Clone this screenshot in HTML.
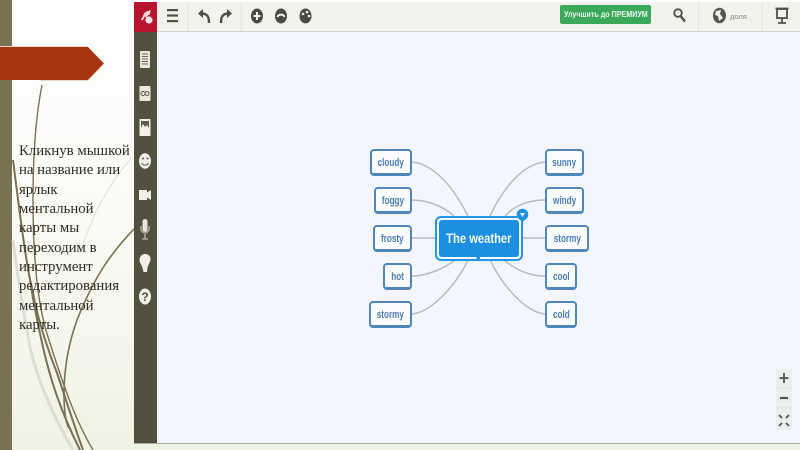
<!DOCTYPE html>
<html lang="ru"><head><meta charset="utf-8"><title>The weather</title>
<style>
html,body{margin:0;padding:0;width:800px;height:450px;overflow:hidden}
body{position:relative;background:linear-gradient(#ffffff 0,#fbfcf8 40%,#eff3e3 100%);font-family:"Liberation Sans",sans-serif}
.abs{position:absolute}
#copy{position:absolute;left:19px;top:142px;width:115px;font:14.8px/19.35px "Liberation Serif",serif;color:#2e2c22;filter:blur(.35px);white-space:nowrap}
.n{position:absolute;box-sizing:border-box;height:27px;background:#fbfcff;border:2px solid #4f87bd;border-bottom-width:3px;border-radius:4px;color:#4a7db5;font:bold 11px/25px "Liberation Sans",sans-serif;text-align:center;filter:blur(.35px);display:flex;justify-content:center}
.n span{display:block;transform:scaleX(.74);white-space:nowrap}
#main{position:absolute;left:435px;top:216px;width:88px;height:45px;box-sizing:border-box;border:2px solid #2196e8;border-radius:6px;background:#f4f8ff;padding:2px;filter:blur(.3px)}
#main div{height:37px;background:#1d8fe1;border-radius:3px;color:#f4f9ff;font:bold 14px/37px "Liberation Sans",sans-serif;display:flex;justify-content:center}
#main span{display:block;transform:scaleX(.8);white-space:nowrap}
#prem{position:absolute;left:560px;top:5px;width:91px;height:19px;background:#3aaa5a;border-radius:2px;color:#eef8ef;font:bold 8.5px/19px "Liberation Sans",sans-serif;display:flex;justify-content:center;filter:blur(.3px)}
#prem span{display:block;transform:scaleX(.84);white-space:nowrap}
</style></head><body>
<div class="abs" style="left:0;top:0;width:12px;height:450px;background:#7a7155"></div>

<svg class="abs" style="left:0;top:0" width="134" height="450" viewBox="0 0 134 450" fill="none">
<polygon points="0,47 88,47 104,63.5 88,80 0,80" fill="#a5340f"/>
<path d="M88,46.5 L0,46.5" stroke="#f3d5c7" stroke-width="1"/>
<path d="M40,80.5 L88,80.5 L104,64" stroke="#f3d5c7" stroke-width="1"/>
<path d="M13,240 C18,280 24,315 30,347 C36,375 52,415 73,450" stroke="#dcdfcf" stroke-width="3"/>
<path d="M132,157 C108,185 92,215 80,253" stroke="#e2e4d6" stroke-width="1.2"/>
<g stroke="#7a7155" fill="none">
<path d="M42,85 C36,115 33,150 33,200 C33,250 36,300 48,337 C58,368 72,415 93,450" stroke-width="1.4"/>
<path d="M13,160 C20,215 26,265 33,293 C38,320 48,350 57,373 C66,400 74,425 83,450" stroke-width="2"/>
<path d="M30,280 C33,300 38,325 43,347 C50,378 60,410 80,450" stroke-width="2"/>
<path d="M134,229 C112,252 95,275 77,320 C68,345 64,370 64,395 C64,410 66,425 69,428" stroke-width="1.6"/>
</g>
</svg>

<div id="copy">Кликнув мышкой<br>на название или<br>ярлык<br>ментальной<br>карты мы<br>переходим в<br>инструмент<br>редактирования<br>ментальной<br>карты.</div>

<!-- App -->
<div class="abs" style="left:134px;top:2px;width:666px;height:441px;background:#f3f6ff;box-shadow:0 1px 0 #a9ad9c"></div>
<div class="abs" style="left:134px;top:2px;width:666px;height:30px;background:#f3f3ed;border-bottom:1px solid #d5d5d0;box-sizing:border-box"></div>
<div class="abs" style="left:134px;top:32px;width:23px;height:411px;background:#52503f"></div>
<div class="abs" style="left:134px;top:2px;width:23px;height:30px;background:#b8142f"></div>

<svg class="abs" style="left:134px;top:0;filter:blur(.3px)" width="666" height="445" viewBox="134 0 666 445">
<!-- logo -->
<g fill="#f6e6e8"><circle cx="149" cy="20" r="3.6"/><circle cx="148" cy="13" r="2"/><path d="M141,20 L145,12 L146.5,13 L143,20Z M145,16 L150,10 L151,11 L146,18Z"/></g>
<!-- hamburger -->
<g fill="#4f4f45"><rect x="167" y="9" width="11" height="2.2"/><rect x="167" y="14.4" width="11" height="2.2"/><rect x="167" y="20" width="11" height="2.2"/></g>
<!-- undo/redo -->
<g fill="none" stroke="#4f4f45" stroke-width="2.4"><path d="M209,23 C209,16 207,13.5 201,13.5"/><path d="M221,23 C221,16 223,13.5 229,13.5"/></g>
<g fill="#4f4f45"><polygon points="198,13.5 203,9 203,18"/><polygon points="232,13.5 227,9 227,18"/></g>
<!-- circles -->
<g fill="#4a4a40"><ellipse cx="257" cy="16" rx="6" ry="7.5"/><ellipse cx="281" cy="16" rx="6" ry="7.5"/><ellipse cx="305.500" cy="16" rx="6" ry="7.5"/></g>
<path d="M257,12 V20 M253.500,16 H260.500" stroke="#f3f3ed" stroke-width="2"/>
<path d="M277.500,17 A3.8,3.8 0 0 1 284.500,17" stroke="#f3f3ed" stroke-width="2" fill="none"/>
<g fill="#f3f3ed"><circle cx="303" cy="14" r="1.3"/><circle cx="307" cy="12" r="1.3"/><circle cx="309" cy="16" r="1.3"/></g>
<!-- separators -->
<g stroke="#e3e3dc"><path d="M188,3 V31 M241,3 V31 M698.500,3 V31 M762,3 V31"/></g>
<!-- search -->
<circle cx="678" cy="13" r="3.800" fill="none" stroke="#4f4f45" stroke-width="1.800"/>
<path d="M680.500,16 L685,21.500" stroke="#4f4f45" stroke-width="2.400"/>
<!-- globe -->
<ellipse cx="719.500" cy="15.500" rx="6.500" ry="7.800" fill="#55554a"/>
<path d="M716,11 L721,10 L720,14 L723,18 L719,21 L718,16 L715,15Z" fill="#f3f3ed"/>
<text x="730" y="19" font-family="Liberation Sans, sans-serif" font-size="7.500" fill="#8d8d85">доля</text>
<!-- presentation -->
<rect x="777" y="9" width="10" height="9" fill="none" stroke="#4f4f45" stroke-width="1.800"/>
<path d="M775.500,8.500 H788.500 M782,18 V22 M778,23 H786" stroke="#4f4f45" stroke-width="1.800"/>

<!-- sidebar icons -->
<rect x="140" y="51" width="10" height="17" rx="1" fill="#e9e9e0"/>
<path d="M142,54 H148 M142,56.500 H148 M142,59 H148 M142,61.500 H148 M142,64 H148" stroke="#6b6a5c" stroke-width="1"/>
<rect x="139.500" y="86" width="11" height="15" rx="1" fill="#e9e9e0"/>
<circle cx="143" cy="93.500" r="2" fill="none" stroke="#56564a" stroke-width="1"/><circle cx="147" cy="93.500" r="2" fill="none" stroke="#56564a" stroke-width="1"/>
<rect x="139.500" y="119" width="11" height="17" fill="#f0f0e8"/>
<path d="M141,121 H149 V128 L147,125 L145,127 L143,124 L141,128Z" fill="#5d5c4e"/>
<ellipse cx="145" cy="161" rx="6" ry="7.800" fill="#efefe7"/>
<circle cx="143" cy="158.500" r="1" fill="#55544a"/><circle cx="147.500" cy="158.500" r="1" fill="#55544a"/>
<path d="M141.500,163 Q145,167.500 148.500,163" stroke="#55544a" stroke-width="1" fill="none"/>
<path d="M139,190 H147 V192.500 L151,190 V200 L147,197.500 V200 H139Z" fill="#f0f0e8"/>
<rect x="142.500" y="219" width="5" height="13" rx="2.500" fill="#e6e6dc"/>
<path d="M141,226 V230 Q145,236 149,230 V226 M145,234 V239 M142,239 H148" stroke="#a9a99c" stroke-width="1.500" fill="none"/>
<path d="M145,254 C149,254 151,257 150.500,260 C150,263 148,265 147.500,268 L147,272 H143.500 L142.500,268 C142,265 139.500,263 139.500,260 C139.500,256.500 142,254 145,254Z" fill="#f0f0e8"/>
<ellipse cx="145" cy="296.500" rx="6" ry="8" fill="#efefe7"/>
<text x="145" y="301" text-anchor="middle" font-family="Liberation Sans, sans-serif" font-weight="bold" font-size="12" fill="#4f4e40">?</text>

<!-- connectors -->
<g fill="none" stroke="#bababa" stroke-width="1.500">
<path d="M412,162 C435,164 455,190 468,216"/>
<path d="M412,200 C425,200 442,205 454,216"/>
<path d="M412,238 H435"/>
<path d="M412,276 C425,276 442,270 455,260"/>
<path d="M412,314 C432,312 456,285 468,260"/>
<path d="M545,162 C522,164 502,190 490,216"/>
<path d="M545,200 C532,200 517,203 505,216"/>
<path d="M522,238 H545"/>
<path d="M545,276 C530,276 516,270 504,260"/>
<path d="M545,314 C525,312 502,285 490,260"/>
</g>
</svg>

<div id="main"><div><span>The weather</span></div></div>
<svg class="abs" style="left:470px;top:255px" width="20" height="7"><rect x="6.500" y="2" width="3.500" height="3" fill="#2196e8"/></svg>
<svg class="abs" style="left:516px;top:208px" width="13" height="15"><circle cx="6.500" cy="6.500" r="5.800" fill="#1d8fe1"/><path d="M6.500,14 L2,9 H11Z" fill="#1d8fe1"/><path d="M4,5 H9 L6.500,9Z" fill="#f4f8ff"/></svg>

<div class="n" style="left:370px;top:149px;width:42px"><span>cloudy</span></div>
<div class="n" style="left:374px;top:187px;width:38px"><span>foggy</span></div>
<div class="n" style="left:373px;top:225px;width:39px"><span>frosty</span></div>
<div class="n" style="left:383px;top:263px;width:29px"><span>hot</span></div>
<div class="n" style="left:369px;top:301px;width:43px"><span>stormy</span></div>
<div class="n" style="left:545px;top:149px;width:39px"><span>sunny</span></div>
<div class="n" style="left:545px;top:187px;width:39px"><span>windy</span></div>
<div class="n" style="left:545px;top:225px;width:44px"><span>stormy</span></div>
<div class="n" style="left:545px;top:263px;width:32px"><span>cool</span></div>
<div class="n" style="left:545px;top:301px;width:32px"><span>cold</span></div>

<div id="prem"><span>Улучшить до ПРЕМИУМ</span></div>

<!-- zoom control -->
<svg class="abs" style="left:775px;top:368px" width="18" height="63">
<rect x="1" y="1" width="16" height="61" rx="2" fill="#eceded"/>
<path d="M9,5 V15 M4.500,10 H13.500" stroke="#55554f" stroke-width="1.800"/>
<path d="M1,20 H17" stroke="#dedfdf"/>
<path d="M5,30 H13" stroke="#55554f" stroke-width="2.200"/>
<path d="M1,40 H17" stroke="#dedfdf"/>
<path d="M4,47 L7,50 M14,47 L11,50 M4,58 L7,55 M14,58 L11,55" stroke="#55554f" stroke-width="1.800"/>
</svg>
</body></html>
